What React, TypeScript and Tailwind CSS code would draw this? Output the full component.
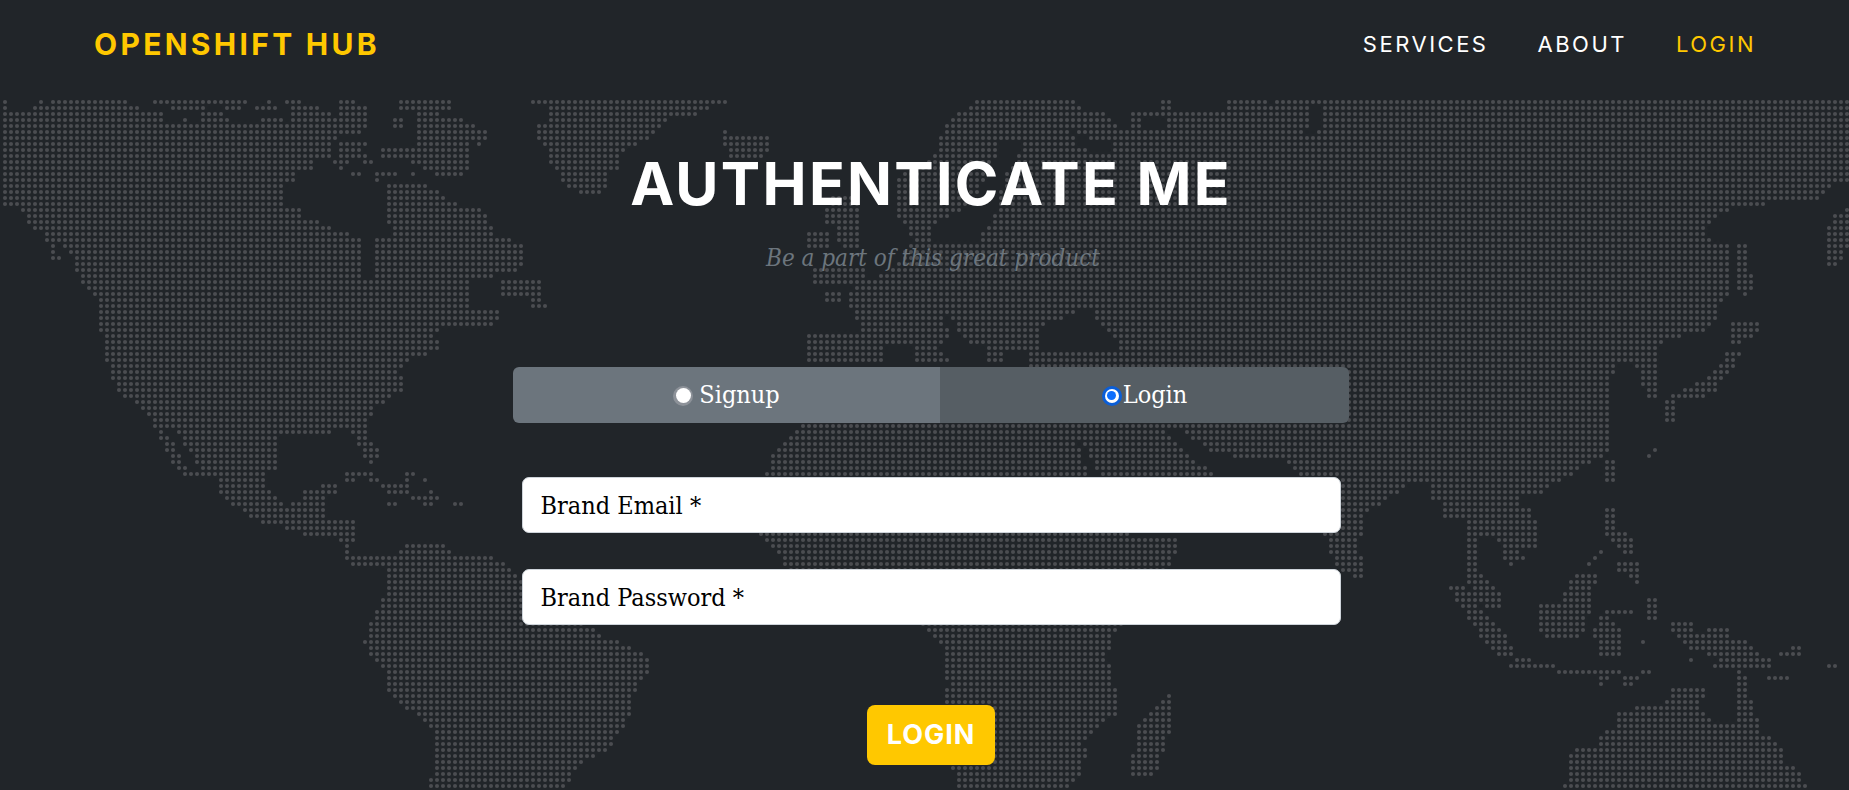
import React from "react";

type Pt = [number, number];

const land: Pt[][] = [
  // North America
  [[-5,123],[368,123],[362,135],[337,136],[332,147],[332,160],[316,160],[314,170],[297,172],[297,183],[286,184],[284,207],[300,209],[302,218],[320,220],[327,226],[340,232],[364,238],[375,238],[390,238],[385,184],[422,184],[437,190],[447,202],[482,208],[492,225],[497,236],[510,238],[527,250],[527,268],[500,275],[473,282],[473,310],[500,312],[497,324],[445,326],[433,333],[437,340],[441,348],[415,358],[398,370],[406,380],[401,392],[390,398],[376,408],[371,418],[366,424],[368,438],[380,450],[380,458],[374,465],[368,462],[358,445],[350,430],[320,433],[272,433],[275,437],[276,472],[265,474],[267,490],[278,500],[285,506],[300,500],[305,487],[337,485],[335,497],[328,498],[326,515],[322,522],[355,522],[355,538],[352,548],[352,555],[378,556],[378,566],[350,566],[342,558],[345,548],[340,540],[315,540],[293,530],[283,528],[265,528],[255,520],[240,510],[225,500],[220,490],[215,478],[190,478],[172,465],[156,430],[150,418],[143,408],[125,398],[118,390],[108,370],[105,350],[100,330],[98,297],[80,285],[80,278],[69,253],[47,237],[34,230],[22,212],[16,207],[-5,203]],
  // Alaska islands
  [[45,233],[52,233],[60,258],[58,265],[52,262]],
  // Baffin
  [[398,99],[453,99],[453,108],[430,110],[440,115],[465,120],[470,125],[490,130],[490,142],[480,145],[470,142],[470,170],[458,178],[442,178],[425,170],[423,163],[381,160],[381,148],[412,148],[417,130],[418,115],[400,110]],
  [[394,117],[405,117],[405,131],[394,131]],
  [[503,280],[543,280],[546,310],[535,311],[530,300],[503,300]],
  // Greenland
  [[533,99],[728,99],[728,103],[710,108],[697,115],[668,120],[660,125],[653,137],[650,142],[625,147],[620,160],[617,170],[607,172],[605,190],[598,196],[590,196],[573,190],[567,185],[558,175],[552,165],[547,155],[545,145],[535,140],[535,125],[547,122],[547,110],[552,105],[533,105]],
  // Iceland
  [[718,135],[725,130],[728,138],[770,138],[772,150],[755,160],[730,158],[722,145]],
  // South America
  [[403,545],[446,545],[450,552],[484,553],[496,558],[508,566],[519,580],[590,627],[605,637],[630,647],[648,657],[655,663],[643,677],[634,693],[630,717],[620,733],[607,750],[580,763],[570,777],[568,792],[428,792],[431,780],[436,757],[431,730],[425,720],[401,707],[389,690],[385,670],[375,660],[363,643],[369,623],[379,607],[387,590],[389,570],[378,566],[378,556],[399,555]],
  // Eurasia
  [[980,99],[1075,99],[1080,108],[1105,112],[1115,120],[1118,130],[1133,130],[1133,113],[1155,113],[1175,112],[1225,112],[1230,99],[1267,99],[1267,105],[1273,105],[1273,99],[1307,99],[1310,105],[1315,99],[1855,99],[1855,182],[1832,184],[1820,200],[1790,203],[1740,205],[1724,213],[1704,233],[1715,240],[1732,248],[1732,290],[1717,310],[1715,320],[1705,330],[1668,340],[1658,350],[1658,358],[1660,380],[1660,397],[1645,397],[1641,380],[1635,362],[1620,360],[1613,375],[1613,450],[1600,458],[1582,468],[1562,480],[1545,487],[1542,497],[1518,497],[1518,507],[1530,510],[1538,520],[1540,540],[1535,550],[1518,548],[1525,560],[1510,567],[1505,562],[1499,540],[1475,537],[1478,567],[1490,580],[1503,600],[1503,610],[1490,610],[1478,600],[1470,585],[1465,570],[1467,517],[1455,520],[1443,520],[1443,505],[1431,497],[1431,487],[1420,482],[1405,487],[1392,497],[1376,507],[1364,517],[1362,533],[1357,545],[1362,560],[1368,580],[1356,580],[1335,567],[1329,545],[1323,533],[1321,525],[1295,470],[1220,460],[1165,428],[1100,425],[1030,400],[1027,367],[1000,363],[808,365],[808,335],[850,332],[862,330],[848,305],[848,296],[857,285],[885,274],[900,262],[905,250],[912,240],[905,222],[897,218],[897,178],[905,170],[925,165],[937,150],[943,130],[953,120],[953,115],[973,105]],
  // Kamchatka
  [[1855,207],[1835,212],[1826,235],[1827,262],[1832,275],[1838,262],[1855,240]],
  // Sakhalin
  [[1737,245],[1748,245],[1753,290],[1745,297],[1738,290]],
  // Novaya
  [[1163,99],[1173,99],[1173,112],[1163,112]],
  // Britain & Ireland
  [[835,195],[860,195],[862,225],[862,252],[840,252],[838,228],[827,228],[827,205]],
  [[808,230],[830,230],[830,252],[808,252]],
  [[813,270],[867,270],[867,283],[813,283]],
  [[827,290],[843,290],[843,303],[827,303]],
  // Africa + Arabia
  [[800,420],[797,430],[785,443],[772,457],[766,473],[760,535],[766,543],[779,553],[785,567],[800,590],[880,600],[925,627],[930,637],[942,647],[942,670],[950,683],[944,697],[950,753],[954,777],[954,792],[1068,792],[1080,777],[1087,753],[1083,740],[1101,727],[1117,713],[1117,693],[1111,677],[1107,653],[1119,627],[1165,570],[1180,552],[1180,538],[1162,538],[1154,535],[1130,535],[1135,530],[1227,530],[1227,473],[1217,463],[1165,430],[1100,420]],
  // Madagascar
  [[1170,692],[1173,692],[1173,722],[1166,745],[1160,760],[1154,778],[1132,778],[1132,755],[1138,740],[1138,722],[1158,706]],
  // Japan
  [[1664,405],[1676,400],[1690,398],[1715,395],[1725,375],[1735,370],[1741,350],[1728,352],[1715,370],[1695,385],[1675,392],[1665,398]],
  [[1664,400],[1677,400],[1677,421],[1664,421]],
  [[1732,323],[1759,323],[1759,333],[1745,340],[1745,350],[1732,345]],
  // Taiwan, Ryukyu
  [[1605,460],[1614,460],[1614,483],[1605,483]],
  [[1657,437],[1661,437],[1661,447],[1650,459],[1646,457],[1655,446]],
  // Philippines
  [[1610,503],[1618,510],[1618,530],[1630,535],[1637,550],[1625,557],[1612,540],[1603,530],[1603,510]],
  [[1615,563],[1643,563],[1643,578],[1635,587],[1628,575],[1615,572]],
  // Sumatra
  [[1449,583],[1461,583],[1475,597],[1490,620],[1505,630],[1515,650],[1512,655],[1500,655],[1480,635],[1470,620],[1455,600]],
  // Borneo
  [[1572,575],[1596,575],[1594,590],[1590,607],[1588,623],[1582,635],[1576,642],[1554,642],[1542,635],[1536,623],[1536,607],[1560,600]],
  // Sulawesi
  [[1603,610],[1633,606],[1633,613],[1610,616],[1620,625],[1620,655],[1600,655],[1597,640],[1591,632],[1600,620]],
  [[1645,600],[1656,600],[1656,624],[1645,624]],
  // New Guinea
  [[1670,619],[1692,619],[1692,630],[1704,636],[1706,630],[1730,630],[1730,636],[1748,638],[1756,650],[1760,658],[1772,660],[1772,672],[1760,672],[1748,672],[1712,672],[1718,660],[1712,655],[1688,652],[1682,640],[1670,633]],
  [[1779,650],[1803,645],[1803,660],[1779,660]],
  [[1767,673],[1789,673],[1789,684],[1767,684]],
  // Australia
  [[1670,690],[1704,690],[1702,705],[1704,717],[1720,722],[1738,724],[1738,672],[1745,672],[1748,690],[1760,722],[1763,732],[1775,740],[1783,752],[1787,762],[1799,770],[1803,780],[1809,785],[1812,792],[1558,792],[1560,783],[1566,780],[1566,755],[1575,750],[1597,745],[1600,735],[1614,728],[1614,716],[1640,705],[1665,705]],
];

const water: Pt[][] = [
  [[362,230],[375,230],[375,277],[362,277]],
  [[166,432],[176,432],[200,470],[190,473]],
  [[1072,130],[1090,140],[1110,143],[1113,155],[1095,152],[1078,145]],
  [[1305,127],[1316,127],[1316,135],[1305,135]],
  [[1313,105],[1322,105],[1322,128],[1313,128]],
  [[1142,120],[1167,120],[1167,128],[1142,128]],
  [[1000,140],[1020,142],[1018,160],[1005,175],[995,215],[975,245],[935,243],[930,225],[950,215],[968,208],[985,180],[995,160]],
  [[887,345],[917,342],[917,367],[887,367]],
  [[935,345],[955,340],[985,345],[985,367],[960,367]],
  [[940,315],[950,315],[965,340],[955,340]],
  [[1007,353],[1027,353],[1027,367],[1007,367]],
  [[1043,325],[1070,315],[1090,308],[1097,318],[1117,338],[1118,352],[1040,348]],
  [[1076,442],[1082,440],[1100,475],[1090,477]],
  [[1163,428],[1178,428],[1218,455],[1285,460],[1295,478],[1227,480],[1200,465]],
];

const rows: [number, number[]][] = [
  [102, [0,7,40,42,51,130,150,245,267,269,284,300,340,355]],
  [108, [0,7,33,142,170,203,222,240,253,275,290,318,340,367]],
  [114, [0,162,198,222,290,330,340,365]],
  [120, [0,165,180,190,200,230,260,285,290,365]],
  [144, [340,365]],
  [150, [340,360]],
  [156, [340,365]],
  [162, [332,350,360,375]],
  [168, [340,345]],
  [174, [350,362,375,400,410,413]],
  [180, [375,380]],
  [474, [345,373,405,417]],
  [480, [345,353,369,379,405,412,425,428]],
  [486, [381,411]],
  [492, [387,411,430,434]],
  [498, [411,440]],
  [504, [387,397,425,432,454,465]],
  [552, [1600,1604]],
  [558, [1592,1598]],
  [564, [1586,1592]],
  [642, [1641,1648]],
  [660, [1516,1534,1690,1692]],
  [666, [1511,1558,1670,1672,1828,1838]],
  [672, [1554,1595,1601,1619,1639,1649]],
  [678, [1597,1607,1625,1637]],
  [684, [1601,1604,1621,1631]],
];

const inside = (x: number, y: number, p: Pt[]) => {
  let c = false;
  for (let i = 0, j = p.length - 1; i < p.length; j = i++) {
    if (p[i][1] > y !== p[j][1] > y && x < ((p[j][0] - p[i][0]) * (y - p[i][1])) / (p[j][1] - p[i][1]) + p[i][0]) c = !c;
  }
  return c;
};

const buildDots = () => {
  let d = "";
  for (let y = 102; y <= 790; y += 6) {
    const spans = rows.find((r) => r[0] === y)?.[1] ?? [];
    for (let x = 5; x < 1849; x += 6) {
      let on = land.some((p) => inside(x, y, p));
      if (on && water.some((p) => inside(x, y, p))) on = false;
      for (let i = 0; i < spans.length; i += 2) if (x >= spans[i] && x <= spans[i + 1]) on = true;
      if (on) d += `M${x} ${y}h0`;
    }
  }
  return d;
};

const dots = buildDots();

function Radio({ checked }: { checked: boolean }) {
  return checked ? (
    <span className="mt-[1px] flex h-[20px] w-[20px] items-center justify-center rounded-full bg-[#0b5ed7]">
      <span className="flex h-[14px] w-[14px] items-center justify-center rounded-full bg-white">
        <span className="h-[9px] w-[9px] rounded-full bg-[#0d6efd]" />
      </span>
    </span>
  ) : (
    <span className="mt-[1px] flex h-[20px] w-[20px] items-center justify-center rounded-full bg-[#8d9299]">
      <span className="h-[15px] w-[15px] rounded-full bg-white" />
    </span>
  );
}

const slab = "font-['DejaVu_Serif_Condensed','DejaVu_Serif',serif]";
const geo = "font-['Inter','Liberation_Sans',sans-serif]";

export default function App() {
  return (
    <div className="relative h-[790px] overflow-hidden bg-[#212529]">
      <svg className="absolute left-0 top-0" width="1849" height="790" viewBox="0 0 1849 790">
        <path d={dots} stroke="#4b4d51" strokeWidth="4.1" strokeLinecap="round" fill="none" />
      </svg>
      <div className="relative">
        <nav className="flex h-[98px] items-center justify-between pb-[9px] pl-[94px] pr-[93px]">
          <a className={`${geo} text-[30px] font-bold tracking-[3.3px] text-[#ffc800]`}>OPENSHIFT HUB</a>
          <ul className={`${geo} flex gap-[49px] text-[22px] font-normal tracking-[2.5px] text-white`}>
            <li>SERVICES</li>
            <li>ABOUT</li>
            <li className="text-[#ffc800]">LOGIN</li>
          </ul>
        </nav>
        <main className="ml-[513px] flex w-[836px] flex-col items-center">
          <h1 className={`${geo} mt-[55px] h-[61px] text-[59px] font-bold leading-[61px] tracking-[2.3px] text-white`}>AUTHENTICATE ME</h1>
          <p className={`${slab} ml-[4px] mt-[28px] h-[32px] text-[24px] italic leading-[32px] text-[#6c757d]`}>Be a part of this great product</p>
          <div className={`${slab} mt-[93px] flex h-[56px] w-full overflow-hidden rounded-[6px] text-[25px] text-white`}>
            <label className="flex w-[427px] items-center justify-center gap-[6px] bg-[#6c757d]">
              <Radio checked={false} />
              <span>Signup</span>
            </label>
            <label className="flex w-[409px] items-center justify-center gap-[1px] bg-[#565e64]">
              <Radio checked />
              <span>Login</span>
            </label>
          </div>
          <form className="flex w-[819px] flex-col items-center">
            <input
              placeholder="Brand Email *"
              className={`${slab} mt-[54px] h-[56px] w-full rounded-[7px] border border-[#ced4da] bg-white px-[18px] text-[25px] text-black placeholder:text-black`}
            />
            <input
              placeholder="Brand Password *"
              className={`${slab} mt-[36px] h-[56px] w-full rounded-[7px] border border-[#ced4da] bg-white px-[18px] text-[25px] text-black placeholder:text-black`}
            />
            <button
              type="button"
              className={`${geo} mt-[80px] h-[60px] w-[128px] rounded-[8px] bg-[#ffc800] text-[27px] font-bold tracking-[1px] text-white`}
            >
              LOGIN
            </button>
          </form>
        </main>
      </div>
    </div>
  );
}
